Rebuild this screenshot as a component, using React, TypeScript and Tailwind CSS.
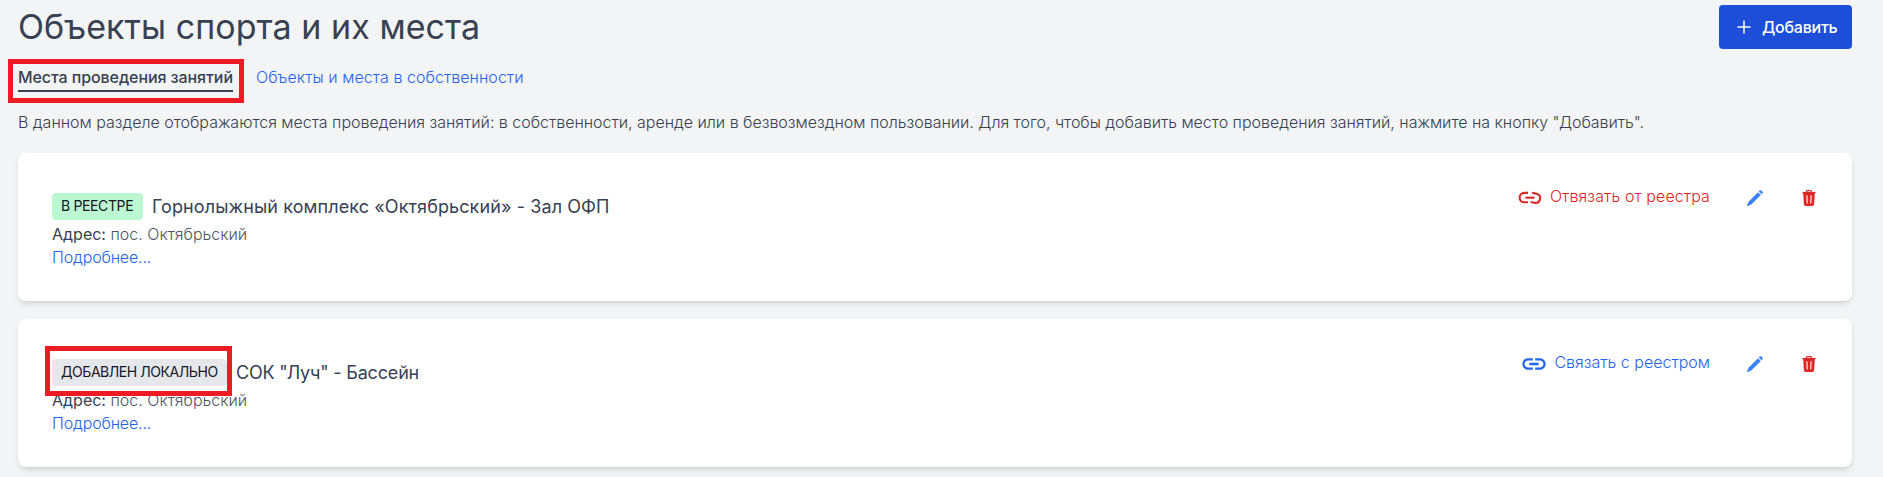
const places = [
  {
    status: 'В РЕЕСТРЕ',
    statusClass: 'w-[91px] bg-[#bbf7d0] tracking-[-0.36px]',
    title: 'Горнолыжный комплекс «Октябрьский» - Зал ОФП',
    titleClass: 'tracking-[0.1px]',
    address: 'пос. Октябрьский',
    linked: true,
    highlighted: false
  },
  {
    status: 'ДОБАВЛЕН ЛОКАЛЬНО',
    statusClass: 'w-[175px] bg-[#e5e7eb] tracking-[-0.44px]',
    title: 'СОК "Луч" - Бассейн',
    titleClass: 'tracking-[-0.18px]',
    address: 'пос. Октябрьский',
    linked: false,
    highlighted: true
  }
];

function LinkIcon() {
  return (
    <svg className="w-[28px] h-[28px]" viewBox="0 0 24 24" fill="currentColor">
      <path d="M3.9 12c0-1.71 1.39-3.1 3.1-3.1h4V7H7c-2.76 0-5 2.24-5 5s2.24 5 5 5h4v-1.9H7c-1.71 0-3.1-1.39-3.1-3.1zM8 13h8v-2H8v2zm9-6h-4v1.9h4c1.71 0 3.1 1.39 3.1 3.1s-1.39 3.1-3.1 3.1h-4V17h4c2.76 0 5-2.24 5-5s-2.24-5-5-5z" />
    </svg>
  );
}

function UnlinkIcon() {
  return (
    <svg className="w-[28px] h-[28px]" viewBox="0 0 28 28" fill="none" stroke="currentColor" strokeWidth="2.1">
      <path d="M12 8.9H8.3a4.7 4.7 0 0 0 0 9.4H12" />
      <path d="M9.5 13.7h9" />
      <path d="M16.2 8.9l4.5 0.9a4.7 4.7 0 0 1-1.4 9.2l-4.6-1.1" />
    </svg>
  );
}

function PencilIcon() {
  return (
    <svg className="w-4 h-4" viewBox="0 0 16 16" fill="currentColor">
      <path d="M11 2.2 13.8 5 4.6 14.2 0.9 15.9Q0 16.1 0.1 15.1L1.8 11.4z" />
      <path d="M11.8 1.4 12.6 0.6Q13.7-0.3 14.9 0.9 16.3 2.3 15.4 3.4L14.6 4.2z" />
    </svg>
  );
}

function TrashIcon() {
  return (
    <svg className="w-[14px] h-4" viewBox="0 0 14 16">
      <path d="M4.4 2.4V1.7q0-1 1-1h3.2q1 0 1 1v.7" fill="none" stroke="currentColor" strokeWidth="1.2" />
      <path d="M0.8 2.1h12.4q.5 0 .5.6t-.5.6H0.8q-.5 0-.5-.6t.5-.6z" fill="currentColor" />
      <path d="M1.2 3h11.6l-.7 11.3q-.1 1.7-1.8 1.7H3.7Q2 16 1.9 14.3z" fill="currentColor" />
      <path d="M4.9 5.3l.3 8.2M9.1 5.3l-.3 8.2" stroke="white" strokeWidth="1.1" />
    </svg>
  );
}

export default function App() {
  return (
    <div className="h-[477px] overflow-hidden bg-[#f3f4f6] pl-[18px] pr-[31px] pt-[5px] font-['Inter',sans-serif] font-light text-base text-[#374151]">
      <div className="flex h-11 items-center justify-between">
        <h1 className="text-[34px] leading-10 font-normal tracking-[0.06px]">Объекты спорта и их места</h1>
        <button className="flex h-11 w-[133px] items-center rounded bg-[#1d4ed8] pl-[18px] text-white font-[550] tracking-[-0.25px]">
          <svg className="mr-[11px] h-[14px] w-[14px]" viewBox="0 0 14 14" stroke="currentColor" strokeWidth="1.5">
            <path d="M7 0.5v13M0.5 7h13" />
          </svg>
          Добавить
        </button>
      </div>

      <nav className="mt-4 flex items-start">
        <div className="relative w-[215px] whitespace-nowrap border-b-2 border-[#374151] pb-px font-medium tracking-[-0.08px]">
          Места проведения занятий
          <div className="absolute -left-[10px] -top-[6px] h-[44px] w-[236px] border-[5px] border-[#ed1c24]" />
        </div>
        <a className="ml-[23px] tracking-[0.05px] text-[#2563eb]">Объекты и места в собственности</a>
      </nav>

      <p className="mt-[18px] leading-6 tracking-[-0.018px]">
        В данном разделе отображаются места проведения занятий: в собственности, аренде или в безвозмездном
        пользовании. Для того, чтобы добавить место проведения занятий, нажмите на кнопку "Добавить".
      </p>

      <div className="mt-[19px] flex flex-col gap-[18px]">
        {places.map((place) => (
          <div key={place.title} className="flex h-[148px] justify-between rounded-lg bg-white pl-[34px] pr-9 shadow-md">
            <div className="pt-10">
              <div className="flex h-7 items-start">
                <div
                  className={`relative h-[27px] whitespace-nowrap rounded pl-[9px] text-sm leading-[26px] font-normal text-[#111827] ${place.statusClass}`}
                >
                  {place.status}
                  {place.highlighted && (
                    <div className="absolute -left-[7px] -top-[13px] h-[50px] w-[187px] border-[5px] border-[#ed1c24]" />
                  )}
                </div>
                <h2 className={`ml-[9px] text-lg leading-7 font-normal ${place.titleClass}`}>{place.title}</h2>
              </div>
              <div className="mt-px leading-6 text-[#4b5563]">
                <span className="font-normal text-[#374151]">Адрес:</span> {place.address}
              </div>
              <a className="block leading-[23px] tracking-[-0.15px] text-[#2563eb]">Подробнее...</a>
            </div>

            <div className="mt-[31px] flex h-7 items-center">
              {place.linked ? (
                <div className="flex items-center text-[#dc2626]">
                  <UnlinkIcon />
                  <span className="ml-[6px] -mt-1 tracking-[0.1px]">Отвязать от реестра</span>
                </div>
              ) : (
                <div className="flex items-center text-[#2563eb]">
                  <LinkIcon />
                  <span className="ml-[6px] -mt-1">Связать с реестром</span>
                </div>
              )}
              <div className="ml-[37px] flex items-center gap-[39px]">
                <span className="text-[#3b82f6]">
                  <PencilIcon />
                </span>
                <span className="text-[#dc2626]">
                  <TrashIcon />
                </span>
              </div>
            </div>
          </div>
        ))}
      </div>
    </div>
  );
}
